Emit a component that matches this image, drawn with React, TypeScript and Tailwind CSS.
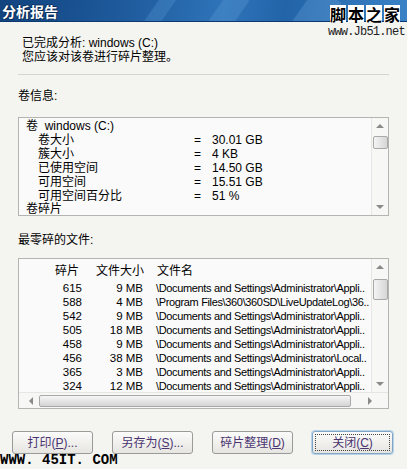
import React from "react";

const FONT = {
  fontFamily: '"Liberation Sans", "Noto Sans CJK SC", sans-serif',
};

interface FileRow {
  frags: number;
  size: string;
  name: string;
}

const volumeRows: [string, string][] = [
  ["卷大小", "30.01 GB"],
  ["簇大小", "4 KB"],
  ["已使用空间", "14.50 GB"],
  ["可用空间", "15.51 GB"],
  ["可用空间百分比", "51 %"],
];

const files: FileRow[] = [
  { frags: 615, size: "9 MB", name: "\\Documents and Settings\\Administrator\\Appli.." },
  { frags: 588, size: "4 MB", name: "\\Program Files\\360\\360SD\\LiveUpdateLog\\36.." },
  { frags: 542, size: "9 MB", name: "\\Documents and Settings\\Administrator\\Appli.." },
  { frags: 505, size: "18 MB", name: "\\Documents and Settings\\Administrator\\Appli.." },
  { frags: 458, size: "9 MB", name: "\\Documents and Settings\\Administrator\\Appli.." },
  { frags: 456, size: "38 MB", name: "\\Documents and Settings\\Administrator\\Local.." },
  { frags: 365, size: "3 MB", name: "\\Documents and Settings\\Administrator\\Appli.." },
  { frags: 324, size: "12 MB", name: "\\Documents and Settings\\Administrator\\Appli.." },
];

function Arrow({ dir }: { dir: "up" | "down" | "left" | "right" }) {
  const pts = {
    up: "0,5 4,1 8,5",
    down: "0,1 4,5 8,1",
    left: "5,0 1,4 5,8",
    right: "1,0 5,4 1,8",
  }[dir];
  const size = dir === "up" || dir === "down" ? { w: 8, h: 6 } : { w: 6, h: 8 };
  return (
    <svg width={size.w} height={size.h} viewBox={`0 0 ${size.w} ${size.h}`}>
      <polygon points={pts} fill="#8a8a8a" />
    </svg>
  );
}

function VScroll({ thumbTop, thumbH }: { thumbTop: number; thumbH: number }) {
  return (
    <div className="flex h-full w-[17px] shrink-0 flex-col items-center border-l border-[#e6e6e2] bg-[#f7f7f5]">
      <div className="flex h-[14px] items-center justify-center pt-[2px]">
        <Arrow dir="up" />
      </div>
      <div className="relative w-full flex-1">
        <div
          className="absolute left-[1px] h-[13px] w-[15px] rounded-[2px] border border-[#a8a8a8] bg-gradient-to-r from-[#f4f4f4] to-[#d6d6d6]"
          style={{ top: thumbTop, height: thumbH }}
        />
      </div>
      <div className="flex h-[14px] items-center justify-center pb-[3px]">
        <Arrow dir="down" />
      </div>
    </div>
  );
}

function Btn({ label, focus }: { label: React.ReactNode; focus?: boolean }) {
  return (
    <div
      className={
        "flex h-[23px] w-[81px] items-center justify-center rounded-[3px] border bg-gradient-to-b from-[#fbfbfb] to-[#e6e5e0] text-[12px] text-[#4a3470] " +
        (focus ? "border-[#7fa6c6] shadow-[0_0_0_1px_#b9d2e6]" : "border-[#9a9a9a]")
      }
    >
      <div
        className={
          "flex h-[17px] w-[75px] items-center justify-center " +
          (focus ? "border border-dotted border-[#444]" : "")
        }
      >
        {label}
      </div>
    </div>
  );
}

export default function App() {
  return (
    <div
      className="relative h-[469px] w-[407px] overflow-hidden bg-[#f4f4f1] text-[12px] text-black"
      style={FONT}
    >
      {/* title bar */}
      <div className="relative h-[22px] overflow-hidden border-b border-[#0d3a6e] bg-[linear-gradient(100deg,#12447f_0%,#1e5a9c_30%,#2f74b9_55%,#2364a8_70%,#3a82c6_100%)]">
        <div className="absolute left-[150px] top-[-10px] h-[50px] w-[14px] rotate-[35deg] bg-[#5b9bd8] opacity-30" />
        <div className="absolute left-[215px] top-[-10px] h-[50px] w-[22px] rotate-[35deg] bg-[#6aa8e0] opacity-25" />
        <div className="absolute left-[300px] top-[-10px] h-[50px] w-[30px] rotate-[35deg] bg-[#7ab4e8] opacity-25" />
        <div
          className="absolute left-[2px] top-[2px] text-[14px] font-bold leading-[18px] text-white"
          style={{
            fontFamily: '"Noto Sans CJK SC", sans-serif',
            textShadow: "1px 1px 0 #0a2e5c, -1px 0 0 #0a2e5c, 0 -1px 0 #0a2e5c",
          }}
        >
          分析报告
        </div>
      </div>

      <div className="flex flex-col px-[18px]">
        <div className="mt-[14px] pl-[4px] leading-[14px]">
          <div>已完成分析: windows (C:)</div>
          <div>您应该对该卷进行碎片整理。</div>
        </div>
        <div className="mt-[10px] h-px bg-[#d4d4d0]" />
        <div className="mt-[14px] leading-[14px]">卷信息:</div>

        {/* volume info box */}
        <div className="mt-[14px] flex h-[99px] border border-[#b4b4b0] bg-[#fafafa]">
          <div className="flex-1 overflow-hidden pl-[7px] pt-[1px] leading-[14px]">
            <div>卷&nbsp; windows (C:)</div>
            {volumeRows.map(([k, v]) => (
              <div key={k} className="flex">
                <span className="w-[168px] shrink-0 pl-[12px]">{k}</span>
                <span className="w-[18px] shrink-0">=</span>
                <span>{v}</span>
              </div>
            ))}
            <div className="leading-[13px]">卷碎片</div>
          </div>
          <VScroll thumbTop={4} thumbH={13} />
        </div>

        <div className="mt-[17px] leading-[14px]">最零碎的文件:</div>

        {/* file list box */}
        <div className="mt-[11px] flex h-[151px] flex-col border border-[#b4b4b0] bg-[#fafafa]">
          <div className="flex min-h-0 flex-1">
            <div className="min-w-0 flex-1 overflow-hidden pt-[5px] leading-[14px]">
              <div className="mb-[3px] flex">
                <span className="w-[60px] shrink-0 text-right">碎片</span>
                <span className="w-[65px] shrink-0 text-right">文件大小</span>
                <span className="shrink-0 pl-[13px]">文件名</span>
              </div>
              {files.map((f, i) => (
                <div key={i} className="flex whitespace-nowrap text-[11.5px]">
                  <span className="w-[63px] shrink-0 text-right">{f.frags}</span>
                  <span className="w-[61px] shrink-0 text-right">{f.size}</span>
                  <span className="shrink-0 pl-[13px] text-[11px] tracking-[-0.35px]">{f.name}</span>
                </div>
              ))}
            </div>
            <VScroll thumbTop={6} thumbH={21} />
          </div>
          <div className="flex h-[16px] shrink-0 items-center border-t border-[#e6e6e2] bg-[#f7f7f5]">
            <div className="flex w-[17px] justify-center pl-[6px]">
              <Arrow dir="left" />
            </div>
            <div className="ml-[3px] h-[12px] w-[312px] rounded-[2px] border border-[#a8a8a8] bg-gradient-to-b from-[#f6f6f6] to-[#d4d4d4]" />
            <div className="ml-[15px] flex w-[8px] justify-center">
              <Arrow dir="right" />
            </div>
          </div>
        </div>
      </div>

      {/* buttons */}
      <div className="mt-[22px] flex gap-[19px] pl-[12px]">
        <Btn label={<>打印(<u>P</u>)...</>} />
        <Btn label={<>另存为(<u>S</u>)...</>} />
        <Btn label={<>碎片整理(<u>D</u>)</>} />
        <Btn label={<>关闭(<u>C</u>)</>} focus />
      </div>

      {/* watermarks */}
      <div className="absolute left-[330px] top-[5px] flex gap-[2px]">
        {["脚", "本", "之", "家"].map((c) => (
          <span
            key={c}
            className="flex h-[17px] w-[16px] items-center justify-center bg-white text-[16px] font-bold leading-none text-black"
            style={{ fontFamily: '"Noto Sans CJK SC", sans-serif' }}
          >
            {c}
          </span>
        ))}
      </div>
      <div
        className="absolute left-[328px] top-[26px] text-[12px] leading-[12px] tracking-[-0.8px] text-[#222]"
        style={{ fontFamily: '"Liberation Mono", monospace' }}
      >
        www.Jb51.net
      </div>
      <div
        className="absolute bottom-[1px] left-0 text-[14px] font-bold leading-[16px] text-black"
        style={{ fontFamily: '"Liberation Mono", monospace' }}
      >
        WWW. 45IT. COM
      </div>
    </div>
  );
}
